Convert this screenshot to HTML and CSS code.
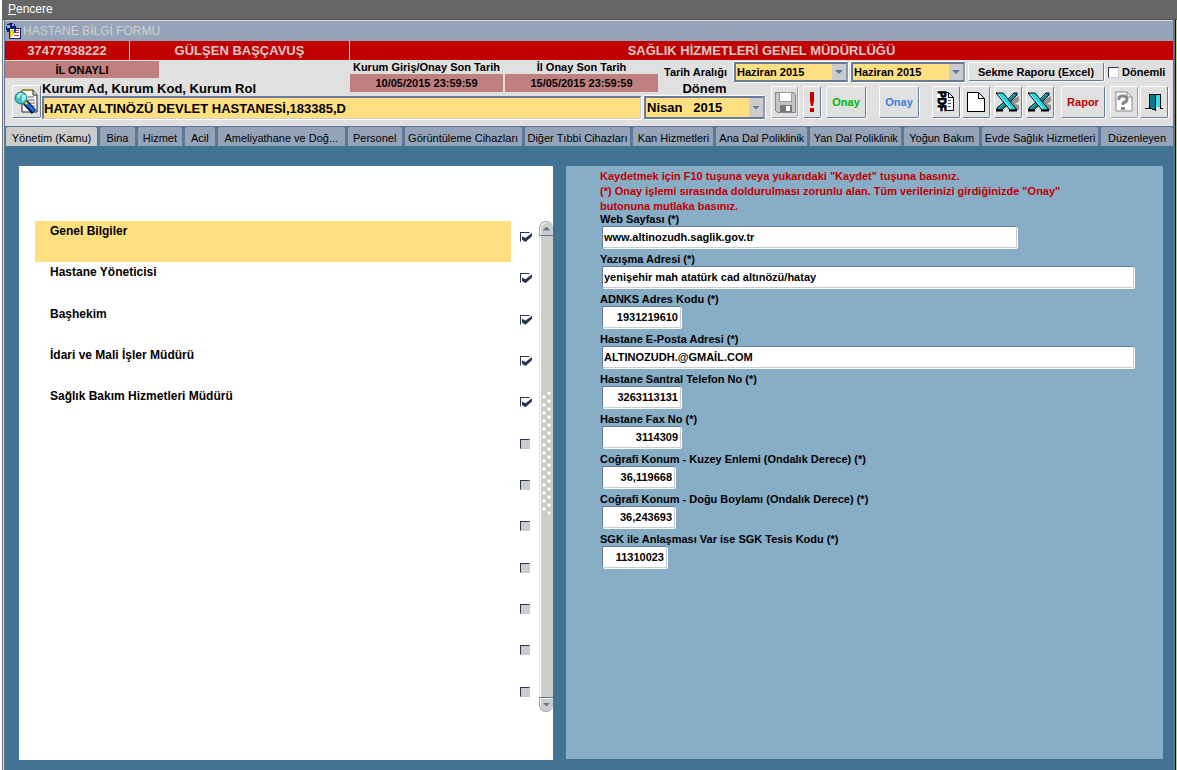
FILE: index.html
```html
<!DOCTYPE html>
<html lang="tr">
<head>
<meta charset="utf-8">
<title>Hastane Bilgi Formu</title>
<link rel="stylesheet" href="styles.css">
</head>
<body>
<nav class="menubar"><button class="menu" type="button"><u>P</u>encere</button></nav>
<main class="window">
  <header class="titlebar">
    <svg class="app-icon" viewBox="0 0 16 16" shape-rendering="crispEdges"><circle cx="6" cy="5" r="5" fill="#102070"/><path d="M2 2h3v3H2zM7 1h2v2H7z" fill="#80b8e0"/><path d="M4 5h11v10H4z" fill="#fff" stroke="#102070"/><path d="M6 7h3v2H8l1 1-4 4 1-3H5z" fill="#ffe000" stroke="#b8a000" stroke-width=".5"/><path d="M9 6h2v4H9z" fill="#2040c0"/><path d="M11 7h3v1h-3zM11 9h3v1h-3zM9 12h5v1H9z" fill="#e03030"/></svg>
    <h1 class="title">HASTANE BİLGİ FORMU</h1>
  </header>
  <div class="identity">
    <span class="identity-cell">37477938222</span>
    <span class="identity-cell">GÜLŞEN BAŞÇAVUŞ</span>
    <span class="identity-cell">SAĞLIK HİZMETLERİ GENEL MÜDÜRLÜĞÜ</span>
  </div>
  <section class="toolbar">
    <div class="status">İL ONAYLI</div>
    <div class="deadline deadline-first"><span>Kurum Giriş/Onay Son Tarih</span><b class="date">10/05/2015 23:59:59</b></div>
    <div class="deadline deadline-second"><span>İl Onay Son Tarih</span><b class="date">15/05/2015 23:59:59</b></div>
    <div class="range">
      <label class="range-label" for="from">Tarih Aralığı</label>
      <span class="combo"><select id="from"><option>Haziran 2015</option></select></span>
      <span class="combo"><select aria-label="Bitiş"><option>Haziran 2015</option></select></span>
      <button class="btn report" type="button">Sekme Raporu (Excel)</button>
      <label class="periodic"><input class="check light" type="checkbox">Dönemli</label>
    </div>
    <button class="btn search" type="button" aria-label="Ara"><svg width="26" height="26" viewBox="0 0 26 26"><path d="M8 1h11l4 5v17H8z" fill="#fff" stroke="#222"/><path d="M8 1h11" stroke="#a09830" stroke-width="2"/><path d="M19 1v5h4" fill="#ddd" stroke="#222"/><path d="M14 8h6M14 11h7M15 14h6M16 17h5" stroke="#555"/><path d="M11 13l9 10" stroke="#001050" stroke-width="6"/><path d="M12 14l8 8" stroke="#1878e0" stroke-width="3"/><path d="M10 12l3 3" stroke="#e8d040" stroke-width="3"/><circle cx="7" cy="9" r="6" fill="#40c0c0" stroke="#207878"/><path d="M3 7q2-4 6-3L4 10zM8 6h4v4l-4 3z" fill="#a8f0e8"/></svg></button>
    <label class="big-label org-label" for="org">Kurum Ad, Kurum Kod, Kurum Rol</label>
    <input class="org" id="org" value="HATAY ALTINÖZÜ DEVLET HASTANESİ,183385,D">
    <label class="big-label term-label" for="term">Dönem</label>
    <span class="combo term"><select id="term"><option>Nisan &nbsp; 2015</option></select></span>
    <div class="actions">
      <button class="btn save muted" type="button" aria-label="Kaydet"><svg width="22" height="22" viewBox="0 0 22 22" shape-rendering="crispEdges"><path d="M1 1h18l2 2v18H3l-2-2z" fill="#c4c4c4" stroke="#888"/><path d="M5 1h12v9H5z" fill="#fff" stroke="#999"/><path d="M6 14h12v7H6z" fill="#777"/><path d="M12 15h4v5h-4z" fill="#fff"/></svg></button>
      <button class="btn alert" type="button" aria-label="Uyarı"><svg width="6" height="22" viewBox="0 0 6 22"><path d="M1 1h4v9L4 15H2L1 10zM1 17h4v4H1z" fill="#c00000"/></svg></button>
      <button class="btn approve green" type="button">Onay</button>
      <button class="btn approve blue" type="button">Onay</button>
      <button class="btn doc pdf" type="button" aria-label="PDF"><svg width="20" height="24" viewBox="0 0 20 24"><path d="M2.500 2.500h10l5 5v13h-15z" fill="#fff" stroke="#000"/><path d="M12.500 2.500v5h5" fill="none" stroke="#000"/><path d="M1 1h9v20H1z" fill="#fff"/><text class="pdf-text" transform="translate(2 1) rotate(90)">PDF</text><path d="M12 10.500h3M12 13.500h3M12 16.500h3" stroke="#555"/></svg></button>
      <button class="btn doc" type="button" aria-label="Yeni"><svg width="20" height="24" viewBox="0 0 20 24" shape-rendering="crispEdges"><path d="M1 2h11l6 6v13H1z" fill="#fff" stroke="#000"/><path d="M12 2v6h6" fill="none" stroke="#000"/></svg></button>
      <button class="btn doc excel-first" type="button" aria-label="Excel"><svg width="26" height="20" viewBox="0 0 26 20"><path d="M17 8l7-4v5l-4 3 4 1v5h-6l-5-5z" fill="#909090"/><path d="M14 6l5-5h3v2L7 18H2v-2z" fill="#088890" stroke="#000"/><path d="M19 2L3 17" stroke="#20d8e0"/><path d="M1 1h7l14 17h-7z" fill="#20d8e0" stroke="#000"/><path d="M3 2l13 15" stroke="#98ffff"/><path d="M1 18.500h7M14 18.500h8" stroke="#000" stroke-width="2"/></svg></button>
      <button class="btn doc excel-second" type="button" aria-label="Excel dönemli"><svg width="26" height="20" viewBox="0 0 26 20"><path d="M17 8l7-4v5l-4 3 4 1v5h-6l-5-5z" fill="#909090"/><path d="M14 6l5-5h3v2L7 18H2v-2z" fill="#088890" stroke="#000"/><path d="M19 2L3 17" stroke="#20d8e0"/><path d="M1 1h7l14 17h-7z" fill="#20d8e0" stroke="#000"/><path d="M3 2l13 15" stroke="#98ffff"/><path d="M1 18.500h7M14 18.500h8" stroke="#000" stroke-width="2"/></svg></button>
      <button class="btn rapor" type="button">Rapor</button>
      <button class="btn doc help muted" type="button" aria-label="Yardım"><svg width="20" height="24" viewBox="0 0 20 24"><path d="M2 2h11l5 5v14H2z" fill="#fff" stroke="#888"/><path d="M13 2v5h5" fill="none" stroke="#888"/><path d="M5 10V8q0-2 4-2t4 3-4 4v2" fill="none" stroke="#888" stroke-width="3"/><path d="M7 17h4v3H7z" fill="#888"/></svg></button>
      <button class="btn doc" type="button" aria-label="Çıkış"><svg width="18" height="20" viewBox="0 0 18 20" shape-rendering="crispEdges"><path d="M0 16h4V2h11v14h3" fill="none" stroke="#000"/><path d="M8 3h7v12H8z" fill="#30e0e8"/><path d="M4 2l6 1v15l-6-2z" fill="#087888" stroke="#000"/></svg></button>
    </div>
  </section>
  <div class="tabs" role="tablist">
    <button class="tab active" role="tab" aria-selected="true" type="button">Yönetim (Kamu)</button>
    <button class="tab" role="tab" type="button">Bina</button>
    <button class="tab" role="tab" type="button">Hizmet</button>
    <button class="tab" role="tab" type="button">Acil</button>
    <button class="tab" role="tab" type="button">Ameliyathane ve Doğ...</button>
    <button class="tab" role="tab" type="button">Personel</button>
    <button class="tab" role="tab" type="button">Görüntüleme Cihazları</button>
    <button class="tab" role="tab" type="button">Diğer Tıbbi Cihazları</button>
    <button class="tab" role="tab" type="button">Kan Hizmetleri</button>
    <button class="tab" role="tab" type="button">Ana Dal Poliklinik</button>
    <button class="tab" role="tab" type="button">Yan Dal Poliklinik</button>
    <button class="tab" role="tab" type="button">Yoğun Bakım</button>
    <button class="tab" role="tab" type="button">Evde Sağlık Hizmetleri</button>
    <button class="tab" role="tab" type="button">Düzenleyen</button>
  </div>
  <div class="content">
    <section class="sections">
      <div class="list">
        <label class="item"><span class="item-name selected">Genel Bilgiler</span><input class="check" type="checkbox" checked></label>
        <label class="item"><span class="item-name">Hastane Yöneticisi</span><input class="check" type="checkbox" checked></label>
        <label class="item"><span class="item-name">Başhekim</span><input class="check" type="checkbox" checked></label>
        <label class="item"><span class="item-name">İdari ve Mali İşler Müdürü</span><input class="check" type="checkbox" checked></label>
        <label class="item"><span class="item-name">Sağlık Bakım Hizmetleri Müdürü</span><input class="check" type="checkbox" checked></label>
        <label class="item"><span class="item-name"></span><input class="check" type="checkbox" disabled></label>
        <label class="item"><span class="item-name"></span><input class="check" type="checkbox" disabled></label>
        <label class="item"><span class="item-name"></span><input class="check" type="checkbox" disabled></label>
        <label class="item"><span class="item-name"></span><input class="check" type="checkbox" disabled></label>
        <label class="item"><span class="item-name"></span><input class="check" type="checkbox" disabled></label>
        <label class="item"><span class="item-name"></span><input class="check" type="checkbox" disabled></label>
        <label class="item"><span class="item-name"></span><input class="check" type="checkbox" disabled></label>
      </div>
      <div class="scroll">
        <button class="scroll-btn up" type="button" aria-label="Yukarı"></button>
        <div class="track"><i class="grip"></i></div>
        <button class="scroll-btn down" type="button" aria-label="Aşağı"></button>
      </div>
    </section>
    <form class="details">
      <p class="notice">Kaydetmek için F10 tuşuna veya yukarıdaki "Kaydet" tuşuna basınız.<br>(*) Onay işlemi sırasında doldurulması zorunlu alan. Tüm verilerinizi girdiğinizde "Onay"<br>butonuna mutlaka basınız.</p>
      <div class="field"><label for="web">Web Sayfası (*)</label><input class="box wide" id="web" value="www.altinozudh.saglik.gov.tr"></div>
      <div class="field"><label for="adr">Yazışma Adresi (*)</label><input class="box full" id="adr" value="yenişehir mah atatürk cad altınözü/hatay"></div>
      <div class="field"><label for="adnks">ADNKS Adres Kodu (*)</label><input class="box number" id="adnks" value="1931219610"></div>
      <div class="field"><label for="mail">Hastane E-Posta Adresi (*)</label><input class="box full" id="mail" value="ALTINOZUDH.@GMAİL.COM"></div>
      <div class="field"><label for="tel">Hastane Santral Telefon No (*)</label><input class="box number" id="tel" value="3263113131"></div>
      <div class="field"><label for="fax">Hastane Fax No (*)</label><input class="box number" id="fax" value="3114309"></div>
      <div class="field"><label for="lat">Coğrafi Konum - Kuzey Enlemi (Ondalık Derece) (*)</label><input class="box number coord" id="lat" value="36,119668"></div>
      <div class="field"><label for="lon">Coğrafi Konum - Doğu Boylamı (Ondalık Derece) (*)</label><input class="box number coord" id="lon" value="36,243693"></div>
      <div class="field"><label for="sgk">SGK ile Anlaşması Var ise SGK Tesis Kodu (*)</label><input class="box number code" id="sgk" value="11310023"></div>
    </form>
  </div>
</main>
</body>
</html>
```

FILE: styles.css
```css
* { box-sizing: border-box; }
body {
  margin: 0;
  min-height: 100vh;
  display: flex;
  flex-direction: column;
  background: #fff;
  color: #000;
  font: bold 11px/14px "Liberation Sans", Arial, sans-serif;
}
button, input, select { margin: 0; padding: 0; border: 0; border-radius: 0; font: inherit; color: inherit; }
svg { display: block; flex: none; }

.menubar { display: flex; height: 20px; margin-left: 2px; padding: 0 0 2px 6px; background: #666; border-bottom: 1px solid #555; }
.menu { background: none; color: #fff; font-size: 12px; font-weight: normal; }

.window {
  flex: 1;
  display: flex;
  flex-direction: column;
  margin-left: 2px;
  border-left: 1px solid #777;
  border-right: 1px solid #c8c878;
  box-shadow: inset 1px 0 #ddd, inset -1px 0 #111;
  background: #5c7899;
  padding: 0 3px 0 2px;
}
.titlebar { display: flex; align-items: center; gap: 2px; height: 21px; border-top: 1px solid #d8d8d8; background: #95a4b8; }
.app-icon { width: 16px; height: 16px; }
.title { margin: 0; color: #d0d0d0; font-size: 12px; font-weight: normal; }

.identity { display: grid; grid-template-columns: 124px 219px 1fr; gap: 1px; background: #e0e0e0; border-bottom: 1px solid #e0e0e0; }
.identity-cell { height: 19px; background: #c00000; color: #ddc8c8; text-align: center; font-size: 13px; line-height: 19px; }

.toolbar {
  display: grid;
  grid-template-columns: 37px 117px minmax(191px, 1fr) 155px 139px 15px 110px 404px;
  grid-template-rows: 20px 15px 30px;
  background: #e0e0e0;
}
.status { grid-area: 1 / 1 / 2 / 3; height: 17px; background: #c08080; text-align: center; line-height: 18px; }
.deadline { display: flex; flex-direction: column; text-align: center; }
.deadline span { line-height: 13px; }
.deadline-first { grid-area: 1 / 4 / 3 / 5; margin-right: 2px; }
.deadline-second { grid-area: 1 / 5 / 3 / 7; margin-right: 1px; }
.date { height: 18px; background: #c08080; line-height: 18px; }
.range { grid-area: 1 / 7 / 2 / 9; display: flex; gap: 3px; height: 20px; padding-left: 5px; margin-top: 1px; }
.range-label { width: 67px; line-height: 20px; }
.combo { position: relative; display: flex; width: 114px; height: 20px; background: #ffdf80; border: 2px solid #667a9c; border-right-color: #8a9cb4; box-shadow: 1px 1px #fff, -1px -1px #fff; }
.combo select { width: 100%; padding-left: 1px; appearance: none; background: linear-gradient(90deg, transparent 0, transparent calc(100% - 14px), #ccc calc(100% - 14px)); }
.combo::after { content: ""; position: absolute; right: 3px; top: 50%; width: 8px; height: 4px; margin-top: -2px; background: #5c7899; clip-path: polygon(0 0, 100% 0, 50% 100%); pointer-events: none; }
.btn { display: flex; align-items: center; justify-content: center; background: #e0e0e0; border: 1px solid #fff; border-right-color: #667a9c; border-bottom-color: #667a9c; border-radius: 2px; box-shadow: 1px 1px #fff; }
.report { width: 136px; height: 19px; }
.periodic { display: flex; align-items: center; gap: 3px; white-space: nowrap; padding-left: 1px; }

.search { grid-area: 2 / 1 / 4 / 2; width: 29px; height: 33px; margin: 4px 0 0 7px; }
.big-label { font-size: 13px; line-height: 15px; }
.org-label { grid-area: 2 / 2 / 3 / 4; }
.org { grid-area: 3 / 2 / 4 / 6; width: calc(100% - 3px); height: 23px; background: #ffdf80; border: 2px solid #667a9c; border-right: 1px solid #ccc; border-bottom: 1px solid #ccc; box-shadow: 1px 1px #fff; font-size: 13px; }
.term-label { grid-area: 2 / 6 / 3 / 8; text-align: center; padding-right: 4px; }
.term { grid-area: 3 / 6 / 4 / 8; width: 121px; height: 23px; font-size: 13px; }
.actions { grid-area: 2 / 8 / 4 / 9; display: flex; padding: 5px 0 0 2px; }
.actions .btn { height: 32px; }
.save { width: 27px; }
.actions .muted { border-right-color: #95a4b8; border-bottom-color: #95a4b8; }
.alert { width: 18px; margin-left: 5px; }
.approve { width: 40px; margin-left: 5px; }
.green { color: #00b800; }
.blue { margin-left: 13px; color: #3c7ce0; }
.doc { width: 28px; margin-left: 2px; }
.pdf { margin-left: 13px; }
.pdf-text { font: bold 10px "Liberation Sans", Arial, sans-serif; fill: #000; stroke: #000; stroke-width: 1px; }
.excel-first, .excel-second { margin-left: 4px; }
.rapor { width: 44px; margin-left: 7px; color: #c00000; }
.help { margin-left: 5px; }

.tabs { display: flex; gap: 3px; height: 21px; padding-left: 1px; background: #5c7899; border-bottom: 1px solid #437393; border-top: 1px solid #5c7899; }
.tab { flex: 91 1 0; min-width: 0; background: #95a4b8; font-size: 11px; font-weight: normal; white-space: nowrap; border-radius: 2px 2px 0 0; padding-top: 3px; }
.tab.active { background: #ccc; }
.tab:nth-child(2) { flex-grow: 35; }
.tab:nth-child(3) { flex-grow: 44; }
.tab:nth-child(4) { flex-grow: 30; }
.tab:nth-child(5) { flex-grow: 127; }
.tab:nth-child(6) { flex-grow: 54; }
.tab:nth-child(7) { flex-grow: 117; }
.tab:nth-child(8) { flex-grow: 106; }
.tab:nth-child(9) { flex-grow: 80; }
.tab:nth-child(10) { flex-grow: 91; }
.tab:nth-child(11) { flex-grow: 91; }
.tab:nth-child(12) { flex-grow: 75; }
.tab:nth-child(13) { flex-grow: 116; }
.tab:nth-child(14) { flex-grow: 72; }

.content { flex: 1; display: grid; grid-template-columns: 534fr 597fr; gap: 13px; padding: 19px 10px 10px 14px; background: #437393; }
.sections { display: flex; padding: 55px 0 43px 16px; background: #fff; }
.list { flex: 1; display: grid; grid-auto-rows: 1fr; }
.item { display: flex; gap: 9px; min-height: 41px; font-size: 12px; }
.item-name { flex: 1; padding: 3px 15px; }
.selected { background: #ffdf80; }
.check { position: relative; flex: none; width: 10px; height: 10px; margin: 11px 9px 0 0; appearance: none; background: #fff; border: 1px solid #ccc; border-top-color: #283450; border-left-color: #283450; }
.check:checked { border-right-color: #fff; border-bottom-color: #fff; }
.check:checked::after { content: ""; position: absolute; left: 1px; top: 0; width: 10px; height: 9px; background: #283450; clip-path: polygon(0 35%, 35% 55%, 100% 0, 100% 35%, 35% 100%, 0 75%); }
.check:disabled { background: #ccc; }
.check.light { width: 11px; height: 11px; margin: 0; }

.scroll { display: flex; flex-direction: column; width: 14px; margin-bottom: 5px; }
.scroll-btn { display: flex; align-items: center; justify-content: center; height: 15px; background: #ccc; border: 1px solid #95a4b8; border-right: 0; box-shadow: inset 1px 1px #fff; }
.scroll-btn::after { content: ""; width: 8px; height: 4px; background: #5c7899; }
.up { border-radius: 7px 7px 0 0; border-bottom-color: #5c7899; }
.up::after { clip-path: polygon(50% 0, 100% 100%, 0 100%); }
.down { border-radius: 0 0 7px 7px; border-top-color: #5c7899; }
.down::after { clip-path: polygon(0 0, 100% 0, 50% 100%); }
.track { flex: 1; display: flex; align-items: center; justify-content: center; background: #ccc; border-left: 1px solid #ddd; box-shadow: inset 1px 0 #fff; }
.grip { width: 10px; height: 124px; margin-top: -28px; background: radial-gradient(circle at 2px 6px, #fff 1px, transparent 2px) 0 0 / 10px 8px, radial-gradient(circle at 7px 2px, #fff 1px, transparent 2px) 0 0 / 10px 8px; }

.details { display: flex; flex-direction: column; gap: 4px; padding: 3px 28px 20px 34px; margin-bottom: 1px; background: #88adc6; }
.notice { margin: 0 0 -6px; color: #c00000; line-height: 15px; }
.field { display: flex; flex-direction: column; align-items: flex-start; }
.box { width: 79px; max-width: 100%; height: 22px; margin-left: 2px; padding: 0 2px 0 1px; background: #fff; border: 1px solid #ccc; border-top-color: #667a9c; border-left-color: #667a9c; border-radius: 2px; box-shadow: 1px 1px #fff; }
.wide { width: 415px; }
.full { width: 532px; }
.number { text-align: right; }
.coord { width: 73px; }
.code { width: 65px; }
```
